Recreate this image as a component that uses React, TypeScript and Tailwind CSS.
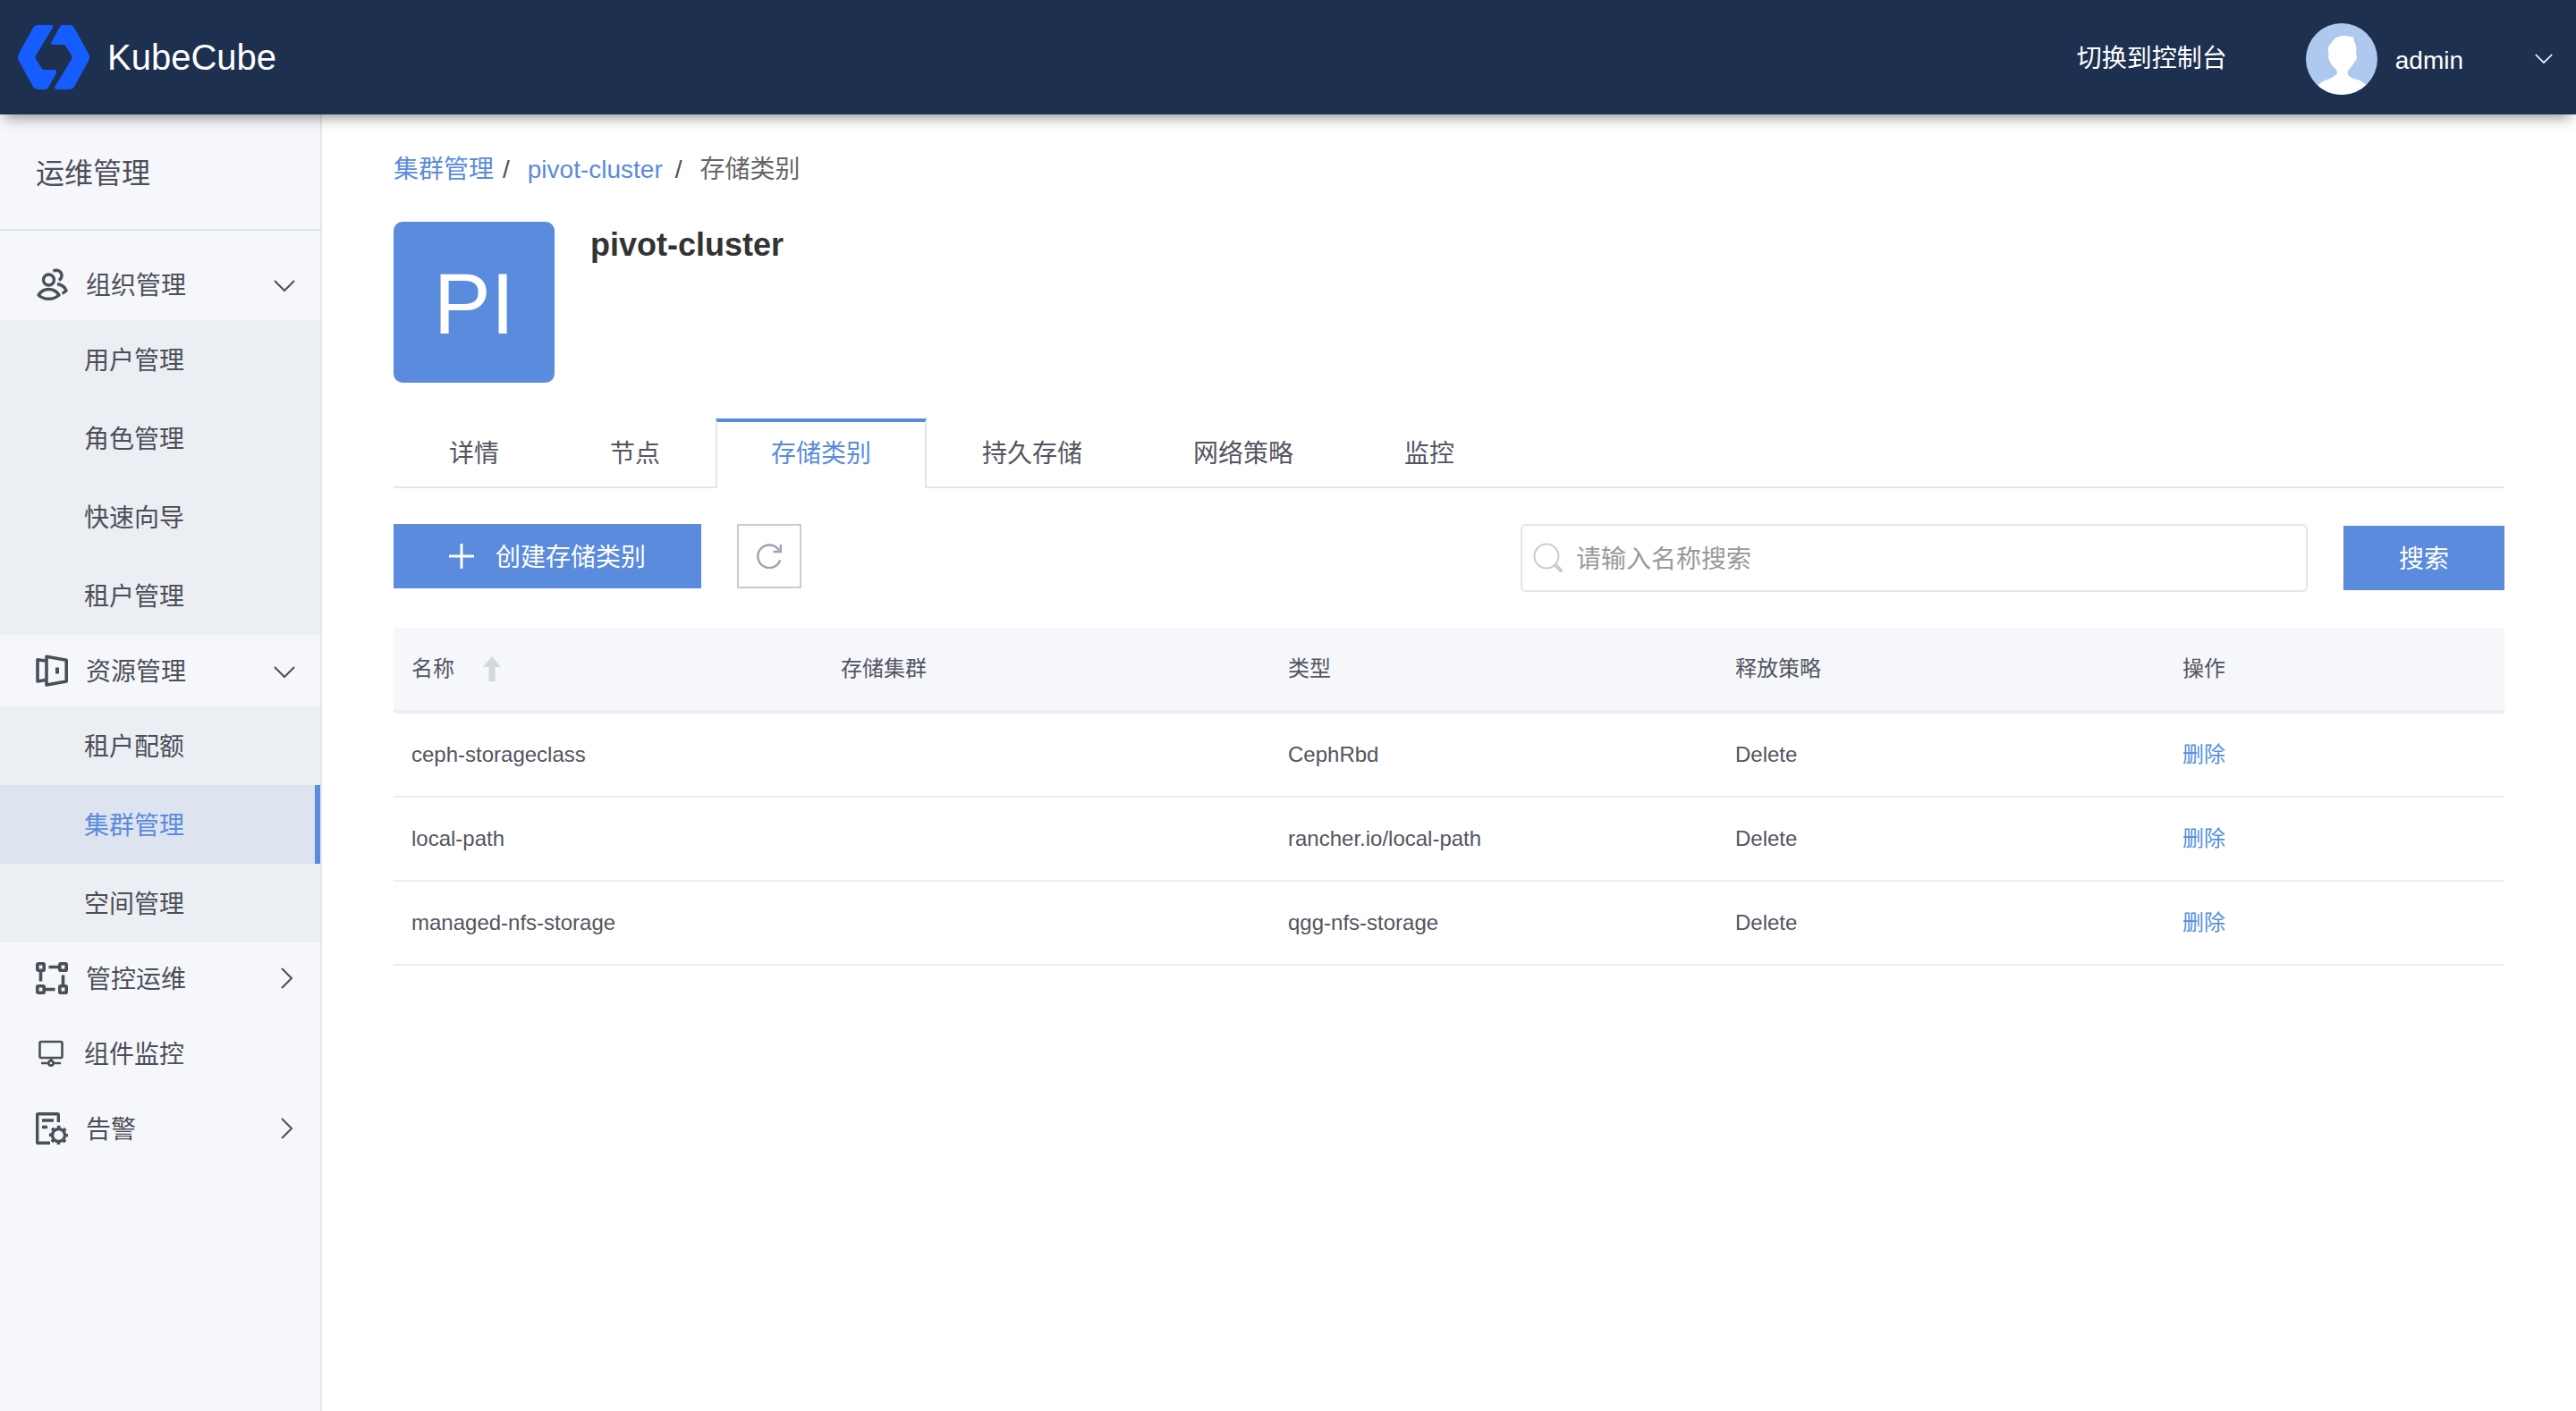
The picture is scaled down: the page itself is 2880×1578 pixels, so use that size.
import React from "react";

const font = "font-['Liberation_Sans','Noto_Sans_CJK_SC',sans-serif]";

type IconProps = { className?: string };

function Logo() {
  return (
    <svg viewBox="0 0 80 72" className="h-[72px] w-20 shrink-0" fill="#165dff" aria-hidden="true">
      <path d="M22 0H37Q40 0 39 3L20 34Q19 36 20 38L27 49Q28 50 30 50H41Q44 51 43 54L34 70Q33 72 31 72H22Q19 72 17 69L1 40Q-1 36 1 32L17 3Q19 0 22 0Z" />
      <path d="M49 0H59Q61 0 63 3L79 32Q81 36 79 40L63 69Q61 72 58 72H43Q40 71 42 68L60 38Q61 36 60 34L53 23Q52 22 50 22H39Q36 21 38 18L47 2Q48 0 49 0Z" />
    </svg>
  );
}

function Avatar() {
  return (
    <svg viewBox="0 0 80 80" className="size-20 shrink-0" aria-hidden="true">
      <defs>
        <clipPath id="avatar-clip">
          <circle cx="40" cy="40" r="40" />
        </clipPath>
      </defs>
      <circle cx="40" cy="40" r="40" fill="#afc8ed" />
      <g clipPath="url(#avatar-clip)" fill="#fff">
        <path d="M41 14C46 13.500 50 15 54 15.500Q52.500 18 55 22Q57 27 56 34Q57.500 36 56.500 40Q55.500 43 54.500 43Q52 48 48 52Q45 55 48 59Q52 62 58 63Q65 66 68 70V80H13V70Q17 65 24 63Q32 60 35 56Q35.500 53 33 51Q28 46 27 43Q24.500 40 25.500 34Q24 29 26 25Q29 21 30 20Q33 15 41 14Z" />
      </g>
    </svg>
  );
}

function ChevronDown({ className }: IconProps) {
  return (
    <svg viewBox="0 0 24 14" className={className} fill="none" stroke="currentColor" strokeWidth="2" aria-hidden="true">
      <path d="M1 1L12 12L23 1" />
    </svg>
  );
}

function ChevronRight({ className }: IconProps) {
  return (
    <svg viewBox="0 0 14 24" className={className} fill="none" stroke="currentColor" strokeWidth="2" aria-hidden="true">
      <path d="M1 1L12 12L1 23" />
    </svg>
  );
}

function OrgIcon() {
  return (
    <svg viewBox="0 0 36 36" className="size-9" fill="none" stroke="currentColor" strokeWidth="3.4" aria-hidden="true">
      <circle cx="14.500" cy="13" r="6" />
      <path d="M3 30Q7 23.500 14.500 23.500T26 30Q21 34.300 14.500 34.300T3 30Z" strokeLinejoin="round" />
      <path d="M19.500 3.200C24 0.800 29 3.500 29 8Q29 11.500 26 13.500" />
      <path d="M24 17.500Q32 19 34 25Q32 27.500 29.500 28" />
    </svg>
  );
}

function ResourceIcon() {
  return (
    <svg viewBox="0 0 36 36" className="size-9" fill="none" stroke="currentColor" strokeWidth="3.600" strokeLinejoin="round" aria-hidden="true">
      <path d="M12 2.200L34.200 6.200V30L12 34Z" />
      <path d="M10.500 7L2 5.800V30L10.500 28.500" />
      <path d="M24 14.500V21.500" strokeWidth="4" />
    </svg>
  );
}

function OpsIcon() {
  return (
    <svg viewBox="0 0 36 36" className="size-9" fill="none" stroke="currentColor" strokeWidth="3.600" aria-hidden="true">
      <rect x="1.800" y="1.800" width="7.400" height="7.400" rx="1" />
      <rect x="26.800" y="1.800" width="7.400" height="7.400" rx="1" />
      <rect x="1.800" y="26.800" width="7.400" height="7.400" rx="1" />
      <rect x="26.800" y="26.800" width="7.400" height="7.400" rx="1" />
      <path d="M14.500 5.500H27M5.500 10V21.500M10 30.500H21.500M30.500 14.500V27" />
    </svg>
  );
}

function MonitorIcon() {
  return (
    <svg viewBox="0 0 36 36" className="size-9" fill="none" stroke="currentColor" strokeWidth="2.600" aria-hidden="true">
      <rect x="4.500" y="5" width="25" height="18" rx="1.500" />
      <circle cx="17" cy="29" r="2.600" />
      <path d="M17 23V26.500M6 29H14.500M19.500 29H28" />
    </svg>
  );
}

function AlarmIcon() {
  return (
    <svg viewBox="0 0 36 36" className="size-9" fill="none" stroke="currentColor" strokeWidth="3.400" aria-hidden="true">
      <path d="M25.300 11V2.600Q25.300 1.700 24.400 1.700H2.600Q1.700 1.700 1.700 2.600V33.400Q1.700 34.300 2.600 34.300H16" />
      <path d="M7 9H20M7 16.500H13" />
      <circle cx="25.500" cy="25.500" r="7" />
      <circle cx="25.500" cy="25.500" r="9.400" strokeWidth="2.600" strokeDasharray="3.600 3.782" strokeDashoffset="1.800" />
    </svg>
  );
}

function RefreshIcon() {
  return (
    <svg viewBox="0 0 28 28" className="size-7" fill="none" stroke="#9da5b0" strokeWidth="2.400" aria-hidden="true">
      <path d="M26.200 18.500A12.800 12.800 0 1 1 25 7.500" />
      <path d="M26.800 1V9H18.500" />
    </svg>
  );
}

function SearchIcon() {
  return (
    <svg viewBox="0 0 34 34" className="size-[34px]" fill="none" stroke="#ccc" aria-hidden="true">
      <circle cx="15" cy="15" r="13.500" strokeWidth="2" />
      <path d="M25 25L31 31" strokeWidth="4" strokeLinecap="round" />
    </svg>
  );
}

function PlusIcon() {
  return (
    <svg viewBox="0 0 28 28" className="size-7" stroke="currentColor" strokeWidth="3" aria-hidden="true">
      <path d="M14 0V28M0 14H28" />
    </svg>
  );
}

type Item = { label: string; active?: boolean };
type Group = { label: string; icon: React.ReactNode; items?: Item[]; leaf?: boolean };

const groups: Group[] = [
  {
    label: "组织管理",
    icon: <OrgIcon />,
    items: [{ label: "用户管理" }, { label: "角色管理" }, { label: "快速向导" }, { label: "租户管理" }],
  },
  {
    label: "资源管理",
    icon: <ResourceIcon />,
    items: [{ label: "租户配额" }, { label: "集群管理", active: true }, { label: "空间管理" }],
  },
  { label: "管控运维", icon: <OpsIcon /> },
  { label: "组件监控", icon: <MonitorIcon />, leaf: true },
  { label: "告警", icon: <AlarmIcon /> },
];

const tabs = ["详情", "节点", "存储类别", "持久存储", "网络策略", "监控"];

const columns = ["存储集群", "类型", "释放策略", "操作"];

const rows = [
  { name: "ceph-storageclass", cluster: "", type: "CephRbd", policy: "Delete" },
  { name: "local-path", cluster: "", type: "rancher.io/local-path", policy: "Delete" },
  { name: "managed-nfs-storage", cluster: "", type: "qgg-nfs-storage", policy: "Delete" },
];

function Header() {
  return (
    <header className="relative z-10 flex h-32 items-center bg-[#1e3050] pr-[26px] pl-5 text-white shadow-[0_10px_14px_-6px_rgba(0,0,0,0.4)]">
      <a href="#" className="flex items-center gap-5">
        <Logo />
        <span className="text-[40px] leading-[48px]">KubeCube</span>
      </a>
      <div className="ml-auto flex items-center gap-[88px] pt-1 text-[28px] leading-10">
        <a href="#">切换到控制台</a>
        <button type="button" className="flex items-center">
          <Avatar />
          <span className="ml-5 pt-1">admin</span>
          <ChevronDown className="ml-20 h-3 w-5" />
        </button>
      </div>
    </header>
  );
}

function Sidebar() {
  return (
    <aside className="w-[360px] shrink-0 border-r-2 border-[#e3e7ec] bg-[#f5f7fb] text-[28px] leading-10 text-[#4c4e58]">
      <h2 className="flex h-[130px] items-center border-b-2 border-[#dbe1e9] pt-1 pl-10 text-[32px]">运维管理</h2>
      <nav className="pt-5">
        {groups.map((g) =>
          g.leaf ? (
            <a key={g.label} href="#" className="flex h-[88px] items-center pl-10">
              {g.icon}
              <span className="ml-[18px] pt-1">{g.label}</span>
            </a>
          ) : (
            <div key={g.label}>
              <button type="button" className="flex h-20 w-full items-center pr-7 pl-10">
                {g.icon}
                <span className="ml-5 pt-1">{g.label}</span>
                {g.items ? (
                  <ChevronDown className="mt-1 ml-auto h-[14px] w-6" />
                ) : (
                  <ChevronRight className="mr-0.5 ml-auto h-6 w-[14px]" />
                )}
              </button>
              {g.items && (
                <ul className="bg-[#ebeef3]">
                  {g.items.map((it) => (
                    <li key={it.label}>
                      <a
                        href="#"
                        className={
                          it.active
                            ? "flex h-[88px] items-center border-r-6 border-[#5a8bdd] bg-[#dde3ef] pt-1 pl-[94px] text-[#5a8bdd]"
                            : "flex h-[88px] items-center pt-1 pl-[94px]"
                        }
                      >
                        {it.label}
                      </a>
                    </li>
                  ))}
                </ul>
              )}
            </div>
          ),
        )}
      </nav>
    </aside>
  );
}

function Breadcrumb() {
  return (
    <nav className="flex text-[28px] leading-10 text-[#4c4e58]" aria-label="breadcrumb">
      <a href="#" className="text-[#5a8bdd]">
        集群管理
      </a>
      <span className="mr-5 ml-[10px]">/</span>
      <a href="#" className="text-[#5a8bdd]">
        pivot-cluster
      </a>
      <span className="mr-5 ml-3.5">/</span>
      <span className="text-[#666]">存储类别</span>
    </nav>
  );
}

function Tabs() {
  return (
    <div role="tablist" className="mt-10 flex text-[28px] leading-10 text-[#53555f]">
      {tabs.map((t) =>
        t === "存储类别" ? (
          <button
            key={t}
            type="button"
            role="tab"
            aria-selected="true"
            className="h-[78px] border-x-2 border-t-4 border-x-[#e0e6ed] border-t-[#5a8bdd] px-[60px] pb-0.5 text-[#5a8bdd]"
          >
            {t}
          </button>
        ) : (
          <button
            key={t}
            type="button"
            role="tab"
            aria-selected="false"
            className="h-[78px] border-b-2 border-[#e0e6ed] px-[62px] pt-1"
          >
            {t}
          </button>
        ),
      )}
      <div className="flex-1 border-b-2 border-[#e0e6ed]" />
    </div>
  );
}

function Toolbar() {
  return (
    <div className="mt-10 flex items-start text-[28px] leading-10">
      <button type="button" className="flex h-[72px] items-center gap-6 bg-[#5a8bdd] px-[62px] text-white">
        <PlusIcon />
        <span className="pt-1">创建存储类别</span>
      </button>
      <button
        type="button"
        aria-label="刷新"
        className="ml-10 flex size-[72px] items-center justify-center border-2 border-[#ccc]"
      >
        <RefreshIcon />
      </button>
      <form className="ml-auto flex items-center gap-10" onSubmit={(e) => e.preventDefault()}>
        <label className="flex h-[76px] w-[880px] items-center gap-3.5 rounded-md border-2 border-[#e0e6ed] pr-4 pl-3">
          <SearchIcon />
          <input
            type="text"
            aria-label="搜索名称"
            placeholder="请输入名称搜索"
            className="min-w-0 flex-1 bg-transparent pt-1 text-[#333] outline-none placeholder:text-[#999]"
          />
        </label>
        <button type="submit" className="h-[72px] w-[180px] bg-[#5a8bdd] pt-1 text-white">
          搜索
        </button>
      </form>
    </div>
  );
}

function StorageTable() {
  return (
    <table className="mt-10 w-full table-fixed border-separate border-spacing-0 text-left text-2xl leading-9 text-[#53555f]">
      <colgroup>
        <col className="w-[480px]" />
        <col className="w-[500px]" />
        <col className="w-[500px]" />
        <col className="w-[500px]" />
        <col />
      </colgroup>
      <thead>
        <tr className="h-24 bg-[#f5f7fb]">
          <th className="border-b-4 border-[#ebeef3] px-5 font-normal">
            <button type="button" className="flex items-center gap-8">
              名称
              <svg viewBox="0 0 20 28" className="h-7 w-5" fill="#d3d9df" aria-hidden="true">
                <path d="M10 0L20 12H13.500V28H6.500V12H0Z" />
              </svg>
            </button>
          </th>
          {columns.map((c) => (
            <th key={c} className="border-b-4 border-[#ebeef3] px-5 font-normal">
              {c}
            </th>
          ))}
        </tr>
      </thead>
      <tbody>
        {rows.map((r) => (
          <tr key={r.name} className="h-[94px]">
            <td className="border-b-2 border-[#ebeef3] px-5">{r.name}</td>
            <td className="border-b-2 border-[#ebeef3] px-5">{r.cluster}</td>
            <td className="border-b-2 border-[#ebeef3] px-5">{r.type}</td>
            <td className="border-b-2 border-[#ebeef3] px-5">{r.policy}</td>
            <td className="border-b-2 border-[#ebeef3] px-5">
              <button type="button" className="text-[#5290dc]">
                删除
              </button>
            </td>
          </tr>
        ))}
      </tbody>
    </table>
  );
}

export default function App() {
  return (
    <div className={`flex min-h-screen flex-col bg-white ${font}`}>
      <Header />
      <div className="flex flex-1">
        <Sidebar />
        <main className="min-w-0 flex-1 px-20 pt-[42px]">
          <Breadcrumb />
          <section className="mt-[38px] flex gap-10">
            <div className="flex size-[180px] items-center justify-center rounded-[10px] bg-[#5a8bdd] pt-1 text-8xl text-white">
              PI
            </div>
            <h1 className="text-4xl leading-[52px] font-bold text-[#333]">pivot-cluster</h1>
          </section>
          <Tabs />
          <Toolbar />
          <StorageTable />
        </main>
      </div>
    </div>
  );
}
